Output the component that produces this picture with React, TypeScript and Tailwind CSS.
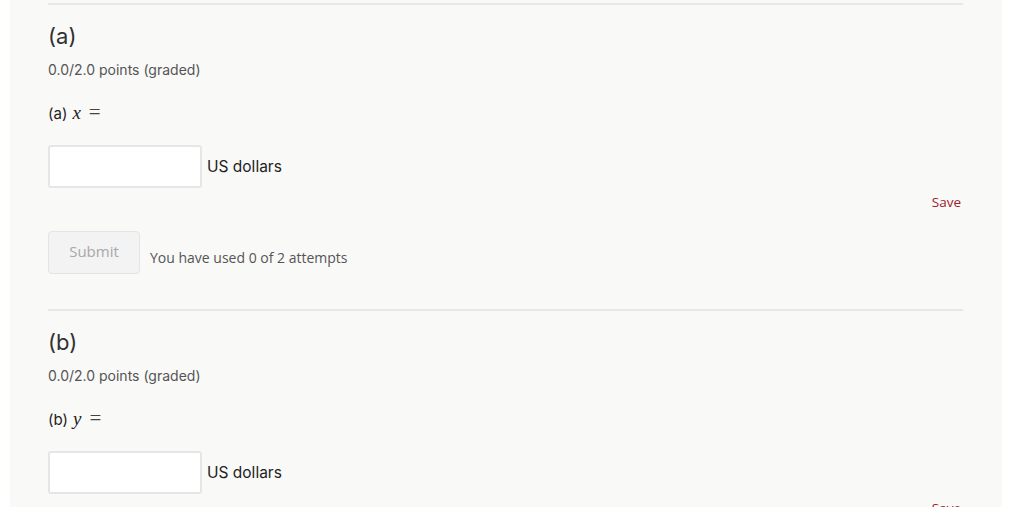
import React from "react";

function Section({ label, v, showSubmit }: { label: string; v: string; showSubmit: boolean }) {
  return (
    <div className="flex flex-col">
      <div className="h-[2px] bg-[#e8e8e8]" />
      <h3 className="mt-[17px] text-[22px] leading-[28px] text-[#313131] font-['Inter',sans-serif] font-normal">({label})</h3>
      <div className="mt-[10px] text-[14px] leading-[20px] text-[#555] font-['Inter',sans-serif]">0.0/2.0 points (graded)</div>
      <div className="mt-[22px] h-[20px] text-[15px] leading-[20px] text-[#222] font-['Inter',sans-serif] flex items-baseline gap-[5px]">
        <span>({label})</span>
        <span className="font-['Liberation_Serif',serif] italic text-[19px] leading-[20px]">{v}</span>
        <span className="font-['Liberation_Serif',serif] text-[21px] leading-[20px] text-[#444] ml-[3px]">=</span>
      </div>
      <div className="mt-[23px] flex items-center gap-[5px]">
        <div className="w-[154px] h-[43px] bg-white border-2 border-[#e6e6e6] rounded-[3px]" />
        <span className="text-[15.5px] leading-[20px] text-[#222] font-['Inter',sans-serif]">US dollars</span>
      </div>
      <div className="mt-[5px] flex justify-end pr-[2px]">
        <span className="text-[13.5px] leading-[18px] text-[#9b1c31] font-['Open_Sans',sans-serif]">Save</span>
      </div>
      {showSubmit && (
        <>
          <div className="mt-[20px] flex items-center gap-[10px]">
            <div className="w-[92px] h-[43px] bg-[#f3f3f3] border border-[#e4e4e4] rounded-[4px] flex items-center justify-center text-[15px] text-[#a8a8a8] font-['Open_Sans',sans-serif] pb-[2px]">
              Submit
            </div>
            <span className="mt-[10px] text-[14px] leading-[18px] text-[#555] font-['Open_Sans',sans-serif]">You have used 0 of 2 attempts</span>
          </div>
          <div className="h-[35px]" />
        </>
      )}
    </div>
  );
}

export default function App() {
  return (
    <div className="w-[1024px] h-[507px] bg-white overflow-hidden">
      <div className="ml-[10px] w-[992px] h-[507px] bg-[#f9f9f8] pl-[38px] pr-[39px] pt-[3px]">
        <Section label="a" v="x" showSubmit={true} />
        <Section label="b" v="y" showSubmit={false} />
      </div>
    </div>
  );
}
